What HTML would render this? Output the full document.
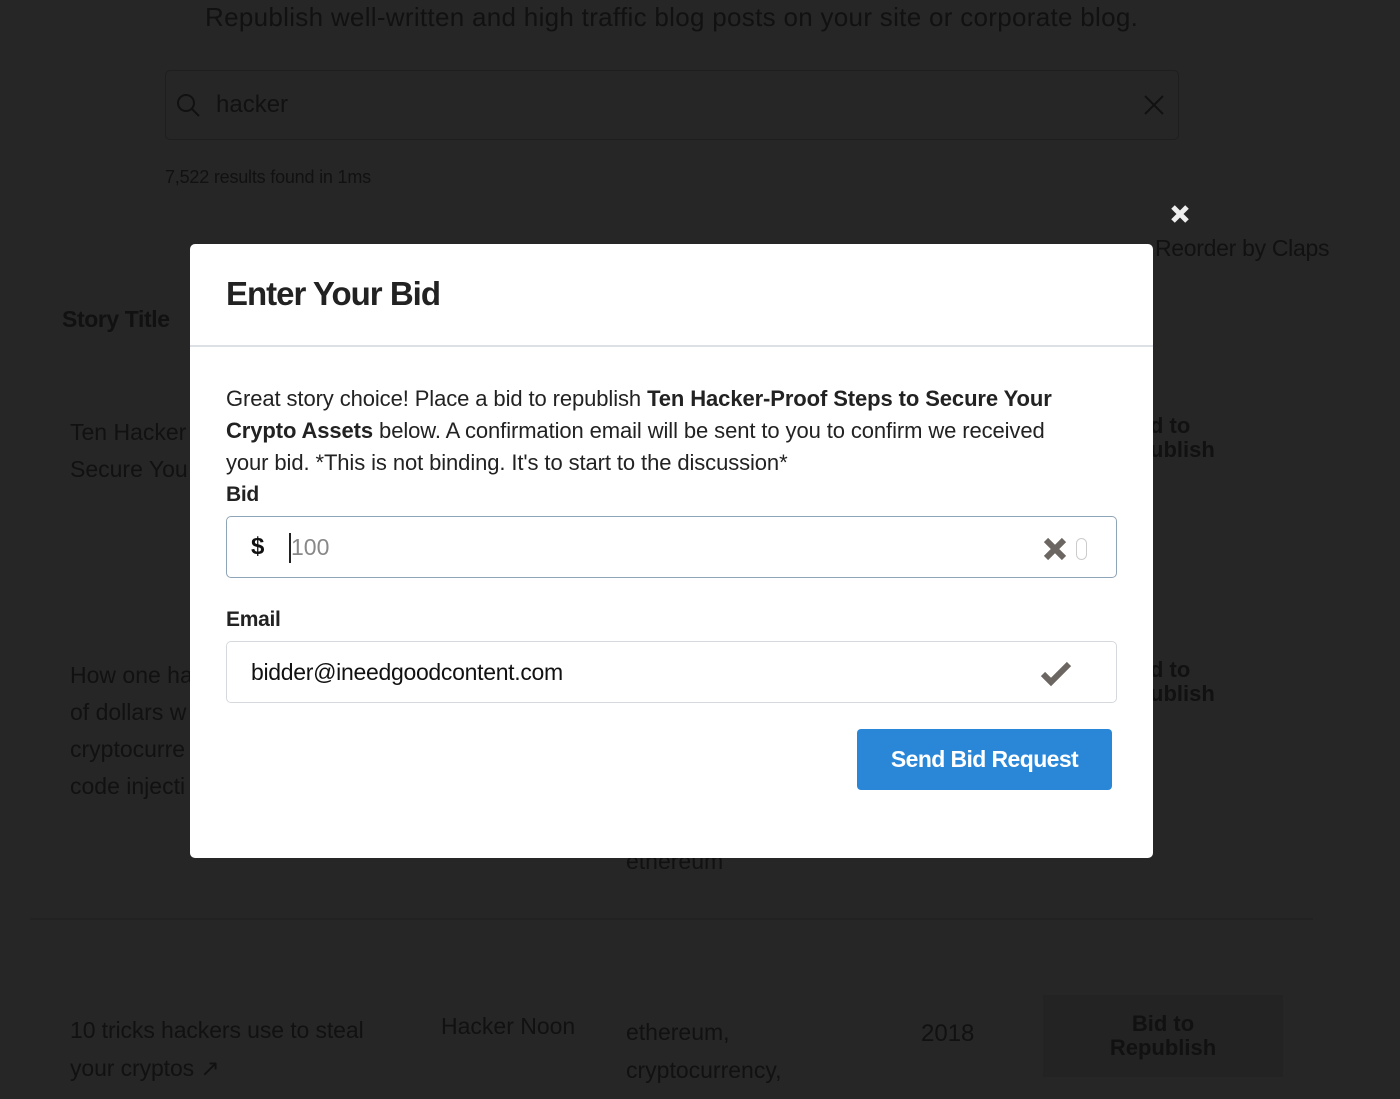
<!DOCTYPE html>
<html><head><style>
body{margin:0;width:1400px;height:1099px;overflow:hidden;background:#262626;font-family:"Liberation Sans",sans-serif;position:relative;color:#111}
.bg{position:absolute;color:#111;white-space:nowrap}
.modal{position:absolute;left:190px;top:244px;width:963px;height:614px;background:#fff;border-radius:5px}
.hdr{height:101px;border-bottom:2px solid #dde1e5;position:relative}
.hdr h2{position:absolute;left:36px;top:31px;margin:0;font-size:33px;font-weight:bold;letter-spacing:-1px;color:#222}
.txt{position:absolute;left:36px;top:139px;width:830px;font-size:22px;line-height:32px;letter-spacing:-.1px;color:#222}
.lbl{position:absolute;left:36px;font-size:21px;font-weight:bold;color:#222;letter-spacing:-.3px}
.inp{position:absolute;left:36px;width:891px;height:62px;border:1px solid #aab4be;border-radius:5px;box-sizing:border-box}
.btn{position:absolute;left:667px;top:485px;width:255px;height:61px;background:#2a87d8;border-radius:4px;color:#fff;font-size:23px;font-weight:bold;text-align:center;line-height:61px;letter-spacing:-.6px}
</style></head><body>
<div class="bg" style="left:205px;top:2px;font-size:26px;letter-spacing:0.3px">Republish well-written and high traffic blog posts on your site or corporate blog.</div>
<div style="position:absolute;left:165px;top:70px;width:1012px;height:68px;border:1px solid #1e1e1e;border-radius:5px"></div>
<svg style="position:absolute;left:175px;top:92px" width="26" height="26"><circle cx="11" cy="11" r="8" fill="none" stroke="#111" stroke-width="2"/><path d="M17 17l7 7" stroke="#111" stroke-width="2"/></svg>
<div class="bg" style="left:216px;top:91px;font-size:24px">hacker</div>
<svg style="position:absolute;left:1143px;top:94px" width="22" height="22"><path d="M2 2L20 20M20 2L2 20" stroke="#111" stroke-width="2"/></svg>
<div class="bg" style="left:165px;top:167px;font-size:18px;letter-spacing:-.2px">7,522 results found in 1ms</div>
<div class="bg" style="left:1155px;top:235px;font-size:23px;letter-spacing:-.3px">Reorder by Claps</div>
<div class="bg" style="left:62px;top:306px;font-size:23px;font-weight:bold;letter-spacing:-.4px">Story Title</div>
<div class="bg" style="left:70px;top:414px;font-size:23px;line-height:37px">Ten Hacker<br>Secure You</div>
<div class="bg" style="left:70px;top:657px;font-size:23px;line-height:37px">How one ha<br>of dollars w<br>cryptocurre<br>code injecti</div>
<div class="bg" style="left:1150px;top:414px;font-size:22px;font-weight:bold;line-height:24px">d to<br>ublish</div>
<div class="bg" style="left:1150px;top:658px;font-size:22px;font-weight:bold;line-height:24px">d to<br>ublish</div>
<div class="bg" style="left:626px;top:848px;font-size:23px">ethereum</div>
<div style="position:absolute;left:30px;top:918px;width:1283px;height:2px;background:#222"></div>
<div class="bg" style="left:70px;top:1011px;font-size:23px;line-height:38px;letter-spacing:-.1px">10 tricks hackers use to steal<br>your cryptos ↗</div>
<div class="bg" style="left:441px;top:1013px;font-size:23px">Hacker Noon</div>
<div class="bg" style="left:626px;top:1013px;font-size:23px;line-height:38px">ethereum,<br>cryptocurrency,</div>
<div class="bg" style="left:921px;top:1020px;font-size:24px">2018</div>
<div style="position:absolute;left:1043px;top:995px;width:240px;height:82px;background:#232323"></div>
<div class="bg" style="left:1043px;top:1012px;width:240px;text-align:center;font-size:22px;font-weight:bold;line-height:24px">Bid to<br>Republish</div>
<svg style="position:absolute;left:1169px;top:203px" width="22" height="22"><path d="M4 4L18 18M18 4L4 18" stroke="#eee" stroke-width="5"/></svg>
<div class="modal">
<div class="hdr"><h2>Enter Your Bid</h2></div>
<div class="txt">Great story choice! Place a bid to republish <b>Ten Hacker-Proof Steps to Secure Your Crypto Assets</b> below. A confirmation email will be sent to you to confirm we received your bid. *This is not binding. It's to start to the discussion*</div>
<div class="lbl" style="top:239px">Bid</div>
<div class="inp" style="top:272px;border-color:#8ea4b8">
<div style="position:absolute;left:24px;top:16px;font-size:24px;font-weight:bold">$</div>
<div style="position:absolute;left:62px;top:16px;width:2px;height:30px;background:#222"></div>
<div style="position:absolute;left:64px;top:17px;font-size:23px;color:#888">100</div>
<svg style="position:absolute;left:815px;top:19px" width="26" height="26"><path d="M4 4L22 22M22 4L4 22" stroke="#6b6661" stroke-width="6"/></svg>
<div style="position:absolute;left:849px;top:21px;width:11px;height:22px;border:1px solid #ccc;border-radius:6px;box-sizing:border-box"></div>
</div>
<div class="lbl" style="top:364px">Email</div>
<div class="inp" style="top:397px;border-color:#d5d9dd">
<div style="position:absolute;left:24px;top:17px;font-size:23px;letter-spacing:-.3px">bidder@ineedgoodcontent.com</div>
<svg style="position:absolute;left:812px;top:16px" width="34" height="30"><path d="M4 16L12 24L30 6" fill="none" stroke="#6b6661" stroke-width="6"/></svg>
</div>
<div class="btn">Send Bid Request</div>
</div>
</body></html>
